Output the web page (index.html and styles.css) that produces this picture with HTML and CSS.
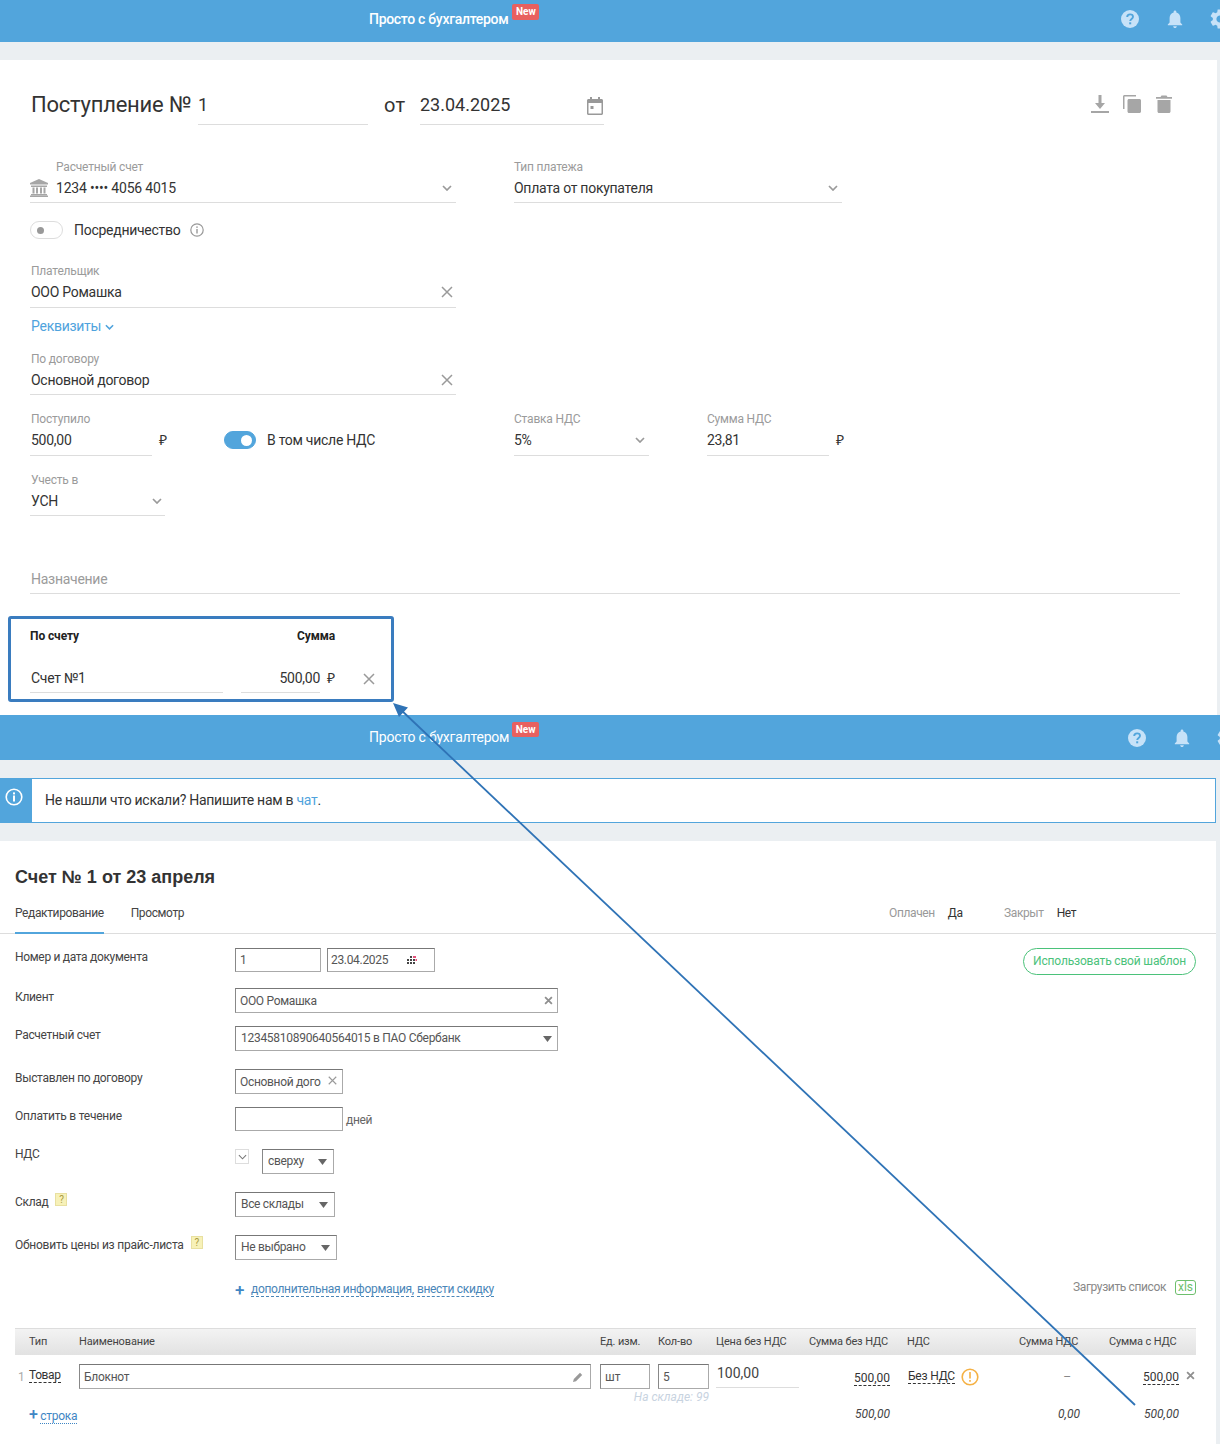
FILE: index.html
```html
<!DOCTYPE html>
<html lang="ru">
<head>
<meta charset="utf-8">
<title>Поступление и счет</title>
<link rel="stylesheet" href="styles.css">
</head>
<body>
<svg class="defs" width="0" height="0" aria-hidden="true">
  <symbol id="i-help" viewBox="0 0 18 18"><circle cx="9" cy="9" r="9" fill="#c7e2f8"/><path d="M6.2 7c0-1.600 1.200-2.600 2.900-2.600S12 5.400 12 6.800c0 2.200-2.800 2.200-2.800 4.300" fill="none" stroke="#52a5dc" stroke-width="1.900"/><rect x="8.200" y="12.300" width="2" height="2" fill="#52a5dc"/></symbol>
  <symbol id="i-bell" viewBox="2 2 20 20"><path fill="#c7e2f8" d="M12 22c1.100 0 2-.9 2-2h-4c0 1.100.9 2 2 2zm6-6v-5c0-3.070-1.630-5.640-4.500-6.320V4c0-.83-.67-1.500-1.500-1.500s-1.500.67-1.500 1.500v.68C7.640 5.360 6 7.920 6 11v5l-2 2v1h16v-1l-2-2z"/></symbol>
  <symbol id="i-gear" viewBox="2 2 20 20"><path fill="#c7e2f8" d="M19.140 12.940c.04-.3.06-.61.06-.94 0-.32-.02-.64-.07-.94l2.030-1.580c.18-.14.23-.41.12-.61l-1.920-3.320c-.12-.22-.37-.29-.59-.22l-2.390.96c-.5-.38-1.030-.7-1.620-.94l-.36-2.540c-.04-.24-.24-.41-.48-.41h-3.840c-.24 0-.43.17-.47.41l-.36 2.540c-.59.24-1.130.57-1.620.94l-2.390-.96c-.22-.08-.47 0-.59.22L2.740 8.870c-.12.21-.08.47.12.61l2.030 1.580c-.05.3-.09.63-.09.94s.02.64.07.94l-2.030 1.580c-.18.14-.23.41-.12.61l1.920 3.320c.12.22.37.29.59.22l2.390-.96c.5.38 1.030.7 1.620.94l.36 2.540c.05.24.24.41.48.41h3.840c.24 0 .44-.17.47-.41l.36-2.540c.59-.24 1.130-.56 1.620-.94l2.390.96c.22.08.47 0 .59-.22l1.920-3.320c.12-.22.07-.47-.12-.61l-2.010-1.580zM12 15.600c-1.980 0-3.600-1.620-3.600-3.600s1.620-3.600 3.600-3.600 3.600 1.620 3.600 3.600-1.620 3.600-3.600 3.600z"/></symbol>
  <symbol id="i-x" viewBox="0 0 12 12"><path d="M1 1l10 10M11 1L1 11" fill="none" stroke="#9a9a9a" stroke-width="1.500"/></symbol>
  <symbol id="i-x-bold" viewBox="0 0 12 12"><path d="M1.500 1.500l9 9M10.500 1.500l-9 9" fill="none" stroke="#8f8f8f" stroke-width="2.400"/></symbol>
  <symbol id="i-chev" viewBox="0 0 10 6"><path d="M1 1l4 4 4-4" fill="none" stroke="#9a9a9a" stroke-width="1.700"/></symbol>
  <symbol id="i-drop" viewBox="0 0 9 6"><path d="M0 0h9L4.500 6z" fill="#666"/></symbol>
</svg>

<section class="shot-a">
  <header class="topbar">
    <span class="brand brand-strong">Просто с бухгалтером</span>
    <span class="badge">New</span>
    <span class="top-icons">
      <svg class="ic-help"><use href="#i-help"/></svg>
      <svg class="ic-bell"><use href="#i-bell"/></svg>
      <svg class="ic-gear"><use href="#i-gear"/></svg>
    </span>
  </header>
  <main class="panel-a">
    <div class="doc-head">
      <h1 class="doc-title">Поступление №</h1>
      <div class="head-field head-num">1</div>
      <span class="head-from">от</span>
      <div class="head-field head-date">23.04.2025
        <svg class="ic-cal" viewBox="0 0 16 18"><path fill="#999" d="M3 0h2v2h6V0h2v2h1.500C15.300 2 16 2.700 16 3.500v13c0 .8-.7 1.500-1.500 1.500h-13C.7 18 0 17.300 0 16.500v-13C0 2.700.7 2 1.500 2H3zM1.500 6v10.500h13V6z"/><rect x="3.500" y="9" width="3" height="3" fill="#999"/></svg>
      </div>
      <div class="head-actions">
        <svg class="ic-act" viewBox="0 0 18 18"><path fill="#a6a6a6" d="M7.500 0h3v8H14l-5 6-5-6h3.500zM0 16h18v2H0z"/></svg>
        <svg class="ic-act" viewBox="0 0 18 18"><path fill="#a6a6a6" d="M6 4h10.500c.8 0 1.500.7 1.500 1.500v11c0 .8-.7 1.500-1.500 1.500H6c-.8 0-1.500-.7-1.500-1.500v-11C4.500 4.700 5.200 4 6 4zM1.500 0H13v1.500H1.500V14H0V1.500C0 .7.7 0 1.500 0z"/></svg>
        <svg class="ic-act" viewBox="0 0 18 18"><path fill="#a6a6a6" d="M2.500 5h13v11.500c0 .8-.7 1.500-1.500 1.500H4c-.8 0-1.500-.7-1.500-1.500zM1 2h4.500l1-1.500h5l1 1.500H17v1.700H1z"/></svg>
      </div>
    </div>

    <div class="row row-account">
      <div class="field w-account">
        <div class="label label-indent">Расчетный счет</div>
        <div class="value value-icon">
          <svg class="ic-bank" viewBox="0 0 18 18"><path fill="#a6a6a6" d="M9 0l9 4v1.500H0V4zM1 6.500h16V8H1zM2.500 8.500h2v6h-2zM6 8.500h2v6H6zM10 8.500h2v6h-2zM13.500 8.500h2v6h-2zM1 15h16v1.200H1zM0 16.500h18V18H0z"/></svg>
          <span class="grow">1234 •••• 4056 4015</span>
          <svg class="ic-chev"><use href="#i-chev"/></svg>
        </div>
      </div>
      <div class="field field-flush w-paytype">
        <div class="label">Тип платежа</div>
        <div class="value"><span class="grow">Оплата от покупателя</span><svg class="ic-chev"><use href="#i-chev"/></svg></div>
      </div>
    </div>

    <div class="row row-agent">
      <span class="switch"><span class="switch-dot"></span></span>
      <span class="agent-text">Посредничество</span>
      <svg class="ic-info" viewBox="0 0 14 14"><circle cx="7" cy="7" r="6.200" fill="none" stroke="#999" stroke-width="1.200"/><rect x="6.300" y="6" width="1.400" height="4.500" fill="#999"/><rect x="6.300" y="3.400" width="1.400" height="1.500" fill="#999"/></svg>
    </div>

    <div class="field w-account row-payer">
      <div class="label">Плательщик</div>
      <div class="value value-tall"><span class="grow">ООО Ромашка</span><svg class="ic-x"><use href="#i-x"/></svg></div>
    </div>
    <a class="link-req">Реквизиты <svg class="ic-chev-blue" viewBox="0 0 10 6"><path d="M1 1l4 4 4-4" fill="none" stroke="#4fa3dd" stroke-width="1.700"/></svg></a>
    <div class="field w-account row-contract">
      <div class="label">По договору</div>
      <div class="value"><span class="grow">Основной договор</span><svg class="ic-x"><use href="#i-x"/></svg></div>
    </div>

    <div class="row row-money">
      <div class="field w-money">
        <div class="label">Поступило</div>
        <div class="value value-tall">500,00</div>
      </div>
      <span class="ruble ruble-a">₽</span>
      <span class="switch switch-on"><span class="switch-dot"></span></span>
      <span class="vat-text">В том числе НДС</span>
      <div class="field field-flush w-rate">
        <div class="label">Ставка НДС</div>
        <div class="value value-tall"><span class="grow">5%</span><svg class="ic-chev"><use href="#i-chev"/></svg></div>
      </div>
      <div class="field field-flush w-money w-vatsum">
        <div class="label">Сумма НДС</div>
        <div class="value value-tall">23,81</div>
      </div>
      <span class="ruble ruble-a">₽</span>
    </div>

    <div class="field w-usn row-usn">
      <div class="label">Учесть в</div>
      <div class="value"><span class="grow">УСН</span><svg class="ic-chev"><use href="#i-chev"/></svg></div>
    </div>

    <div class="value row-purpose">Назначение</div>

    <div class="inv-head"><span class="inv-c1">По счету</span><span class="inv-c2">Сумма</span></div>
    <div class="inv-row">
      <div class="value inv-name">Счет №1</div>
      <div class="value inv-sum">500,00</div>
      <span class="ruble ruble-b">₽</span>
      <svg class="ic-x inv-x"><use href="#i-x"/></svg>
    </div>
  </main>
</section>

<section class="shot-b">
  <header class="topbar topbar-b">
    <span class="brand">Просто с бухгалтером</span>
    <span class="badge">New</span>
    <span class="top-icons top-icons-b">
      <svg class="ic-help"><use href="#i-help"/></svg>
      <svg class="ic-bell"><use href="#i-bell"/></svg>
      <svg class="ic-gear"><use href="#i-gear"/></svg>
    </span>
  </header>
  <div class="notice">
    <div class="notice-side"><svg class="ic-notice" viewBox="0 0 18 18"><circle cx="9" cy="9" r="7.800" fill="none" stroke="#fff" stroke-width="1.600"/><rect x="8" y="7.500" width="2" height="6" fill="#fff"/><rect x="8" y="4.400" width="2" height="2" fill="#fff"/></svg></div>
    <p class="notice-text">Не нашли что искали? Напишите нам в <a class="notice-link">чат</a>.</p>
  </div>
  <main class="panel-b">
    <h2 class="inv-title">Счет № 1 от 23 апреля</h2>
    <nav class="tabs">
      <span class="tab tab-active">Редактирование</span>
      <span class="tab">Просмотр</span>
      <span class="status status-first"><span class="status-key">Оплачен</span><span class="status-val">Да</span></span>
      <span class="status"><span class="status-key">Закрыт</span><span class="status-val">Нет</span></span>
    </nav>

    <div class="doc-body">
      <div class="doc-form">
        <div class="doc-row">
          <div class="doc-label">Номер и дата документа</div>
          <div class="inp w-num">1</div>
          <div class="inp w-date">23.04.2025
            <svg class="ic-grid" viewBox="0 0 10 8"><path fill="#444" d="M3 0h2v2H3zM0 3h2v2H0zM3 3h2v2H3zM6 3h2v2H6zM0 6h2v2H0zM3 6h2v2H3zM6 6h2v2H6z"/><path fill="#e2517a" d="M6 0h3v2H6zM8.500 3H10v2H8.500z"/></svg>
          </div>
        </div>
        <div class="doc-row mt16 h25">
          <div class="doc-label">Клиент</div>
          <div class="inp w-wide"><span class="grow">ООО Ромашка</span><svg class="ic-x-small"><use href="#i-x-bold"/></svg></div>
        </div>
        <div class="doc-row mt13 h25">
          <div class="doc-label">Расчетный счет</div>
          <div class="inp w-wide inp-select"><span class="grow">12345810890640564015 в ПАО Сбербанк</span><svg class="ic-drop"><use href="#i-drop"/></svg></div>
        </div>
        <div class="doc-row mt18 h25">
          <div class="doc-label">Выставлен по договору</div>
          <div class="inp w-contract"><span class="grow">Основной дого</span><svg class="ic-x-contract"><use href="#i-x"/></svg></div>
        </div>
        <div class="doc-row mt13">
          <div class="doc-label doc-label-loose">Оплатить в течение</div>
          <div class="inp w-contract"></div>
          <span class="days">дней</span>
        </div>
        <div class="doc-row mt18 h25">
          <div class="doc-label doc-label-high">НДС</div>
          <span class="check"><svg class="ic-check" viewBox="0 0 10 6"><path d="M1 1l4 4 4-4" fill="none" stroke="#777" stroke-width="1.200"/></svg></span>
          <div class="inp inp-select w-top"><span class="grow">сверху</span><svg class="ic-drop"><use href="#i-drop"/></svg></div>
        </div>
        <div class="doc-row mt18 h25">
          <div class="doc-label doc-label-low">Склад<span class="hint">?</span></div>
          <div class="inp inp-select w-store"><span class="grow">Все склады</span><svg class="ic-drop"><use href="#i-drop"/></svg></div>
        </div>
        <div class="doc-row mt18 h25">
          <div class="doc-label doc-label-low doc-label-loose">Обновить цены из прайс-листа<span class="hint">?</span></div>
          <div class="inp inp-select w-price"><span class="grow">Не выбрано</span><svg class="ic-drop"><use href="#i-drop"/></svg></div>
        </div>
      </div>
      <a class="template-btn">Использовать свой шаблон</a>
    </div>

    <div class="extra-row">
      <span class="extra-plus">+</span>
      <a class="dash-link">дополнительная информация,</a>
      <a class="dash-link">внести скидку</a>
      <span class="upload">Загрузить список</span>
      <span class="xls">xls</span>
    </div>

    <div class="tbl tbl-head">
      <span></span><span>Тип</span><span>Наименование</span><span>Ед. изм.</span><span>Кол-во</span><span>Цена без НДС</span><span>Сумма без НДС</span><span>НДС</span><span>Сумма НДС</span><span>Сумма с НДС</span>
    </div>
    <div class="tbl tbl-body">
      <span class="cell-no">1</span>
      <span class="cell-type"><a class="dash-dark">Товар</a></span>
      <div class="inp w-name"><span class="grow">Блокнот</span><svg class="ic-pencil" viewBox="0 0 10 10"><path fill="#999" d="M0 10l.8-3L7 .8 9.200 3 3 9.200z"/></svg></div>
      <div class="inp w-unit">шт</div>
      <div class="inp w-qty">5</div>
      <div class="cell-price">100,00</div>
      <div class="cell-sum"><a class="dash-dark">500,00</a></div>
      <div class="cell-vat"><a class="dash-dark">Без НДС</a><svg class="ic-warn" viewBox="0 0 18 18"><circle cx="9" cy="9" r="7.800" fill="none" stroke="#f5b144" stroke-width="1.600"/><rect x="8.200" y="4" width="1.600" height="6.500" fill="#f5b144"/><rect x="8.200" y="12" width="1.600" height="1.800" fill="#f5b144"/></svg></div>
      <div class="cell-vatsum">–</div>
      <div class="cell-total"><a class="dash-dark">500,00</a><svg class="ic-x-row"><use href="#i-x-bold"/></svg></div>

      <div class="stock">На складе: 99</div>

      <div class="add-row"><span class="add-plus">+</span> <a class="dot-link">строка</a></div>
      <div class="tot tot-sum">500,00</div>
      <div class="tot tot-vat">0,00</div>
      <div class="tot tot-total">500,00</div>
    </div>
  </main>
</section>

<div class="callout"></div>
<svg class="arrow" viewBox="0 0 1220 1444">
  <line x1="1135" y1="1405" x2="400" y2="709" stroke="#2f73b6" stroke-width="1.800"/>
  <path d="M393 703l15 4.500-9 9.500z" fill="#2f73b6"/>
</svg>
</body>
</html>
```

FILE: styles.css
```css
* { box-sizing: border-box; }
html, body { margin: 0; padding: 0; }
body {
  width: 1220px;
  height: 1444px;
  overflow: hidden;
  position: relative;
  background: #ebeff2;
  font-family: Roboto, "Liberation Sans", sans-serif;
  font-size: 14px;
  letter-spacing: -.27px;
  color: #333;
}
.defs { position: absolute; }
p, h1, h2 { margin: 0; }
.grow { flex: 1; min-width: 0; white-space: nowrap; overflow: hidden; }

/* Top bar */
.topbar {
  height: 42px;
  background: #52a5dc;
  display: flex;
  padding-left: 369px;
  overflow: hidden;
  position: relative;
}
.topbar-b { height: 45px; }
.brand { color: #fff; font-size: 14px; line-height: 20px; margin-top: 9px; letter-spacing: -.22px; white-space: nowrap; }
.brand-strong { font-weight: 500; letter-spacing: -.3px; }
.topbar-b .brand { margin-top: 12px; }
.badge {
  background: #e8605f;
  color: #fff;
  font-size: 10px;
  font-weight: 700;
  letter-spacing: 0;
  line-height: 15px;
  height: 16px;
  width: 27px;
  text-align: center;
  border-radius: 2px;
  margin: 4px 0 0 4px;
}
.topbar-b .badge { margin: 7px 0 0 3px; height: 15px; }
.top-icons { margin-left: auto; display: flex; align-items: center; gap: 26px; margin-right: -10px; height: 38px; }
.top-icons-b { margin-right: -17px; height: 45px; }
.ic-help { width: 18px; height: 18px; margin-right: 1px; }
.ic-bell { width: 18px; height: 18px; }
.ic-gear { width: 20px; height: 20px; }

/* First panel */
.shot-a { height: 715px; }
.panel-a {
  margin-top: 18px;
  width: 1217px;
  height: 655px;
  background: #fff;
  padding: 27px 0 0 30px;
}
.doc-head { display: flex; height: 38px; }
.doc-title { font-size: 22px; font-weight: 400; letter-spacing: -.23px; line-height: 36px; margin-left: 1px; width: 167px; white-space: nowrap; color: #333; }
.head-field { font-size: 18px; letter-spacing: 0; line-height: 36px; border-bottom: 1px solid #ddd; height: 38px; display: flex; align-items: flex-start; }
.head-num { width: 170px; }
.head-from { font-size: 20px; letter-spacing: .3px; line-height: 36px; margin: 0 14px 0 16px; width: 22px; }
.head-date { width: 184px; justify-content: space-between; }
.ic-cal { width: 16px; height: 18px; margin: 10px 1px 0 0; }
.head-actions { display: flex; gap: 14px; margin-left: auto; margin-right: 44px; padding-top: 8px; }
.ic-act { width: 18px; height: 18px; }

.row { display: flex; }
.field { flex: none; }
.label { font-size: 12px; letter-spacing: -.2px; line-height: 14px; color: #9b9b9b; white-space: nowrap; padding-left: 1px; }
.label-indent { padding-left: 26px; }
.value {
  display: flex;
  align-items: center;
  font-size: 14px;
  line-height: 20px;
  padding: 4px 0 4px 1px;
  border-bottom: 1px solid #ddd;
  color: #333;
  white-space: nowrap;
}
.value-icon { padding-left: 0; letter-spacing: -.2px; }
.value-tall { padding-bottom: 5px; }
.field-flush .label, .field-flush .value { padding-left: 0; }
.row-account { margin-top: 35px; }
.w-account { width: 426px; }
.w-paytype { width: 328px; margin-left: 58px; }
.ic-bank { width: 18px; height: 18px; margin-right: 8px; }
.ic-chev { width: 10px; height: 6px; margin-right: 4px; flex: none; }
.ic-x { width: 12px; height: 12px; margin-right: 3px; flex: none; }

.row-agent { margin-top: 18px; height: 18px; align-items: center; }
.switch { width: 33px; height: 18px; border: 1px solid #ddd; border-radius: 9px; display: flex; align-items: center; padding-left: 6px; flex: none; }
.switch-dot { width: 7px; height: 7px; border-radius: 50%; background: #999; }
.agent-text { margin-left: 11px; width: 116px; white-space: nowrap; }
.ic-info { width: 14px; height: 14px; }

.row-payer { margin-top: 25px; }
.link-req { display: flex; align-items: center; gap: 4px; color: #4fa3dd; line-height: 20px; margin-top: 8px; padding-left: 1px; }
.ic-chev-blue { width: 9px; height: 6px; margin-top: 1px; }
.row-contract { margin-top: 16px; }

.row-money { margin-top: 17px; }
.w-money { width: 122px; }
.ruble { font-family: "Liberation Sans", sans-serif; font-size: 14px; letter-spacing: 0; line-height: 20px; }
.ruble-a { margin: 18px 0 0 7px; width: 8px; }
.switch-on { background: #52a5dc; border-color: #52a5dc; width: 32px; margin: 19px 0 0 57px; justify-content: flex-end; padding: 0 3px 0 0; }
.switch-on .switch-dot { width: 11px; height: 11px; background: #fff; }
.vat-text { margin: 18px 0 0 11px; line-height: 20px; width: 247px; white-space: nowrap; }
.w-rate { width: 135px; }
.w-vatsum { margin-left: 58px; }

.row-usn { margin-top: 17px; }
.w-usn { width: 135px; }
.w-usn .ic-chev { margin-right: 3px; }
.row-purpose { margin-top: 49px; width: 1150px; color: #9b9b9b; }

.inv-head { display: flex; margin-top: 35px; font-size: 12px; font-weight: 700; letter-spacing: -.1px; line-height: 14px; color: #222; width: 305px; justify-content: space-between; }
.inv-row { display: flex; margin-top: 21px; }
.inv-name { width: 193px; }
.inv-sum { width: 79px; margin-left: 18px; justify-content: flex-end; }
.ruble-b { margin: 4px 0 0 7px; width: 8px; }
.inv-x { margin: 9px 0 0 28px; }

/* Second panel */
.shot-b { height: 729px; }
.notice {
  margin-top: 18px;
  width: 1216px;
  height: 45px;
  display: flex;
  background: #fff;
  border: 1px solid #52a5dc;
  border-left: 0;
}
.notice-side { width: 32px; background: #52a5dc; padding: 9px 0 0 5px; }
.ic-notice { width: 18px; height: 18px; display: block; }
.notice-text { margin-left: 13px; line-height: 42px; color: #333; }
.notice-link { color: #4fa3dd; }

.panel-b {
  margin-top: 18px;
  width: 1216px;
  height: 603px;
  background: #fff;
  padding-top: 26px;
  letter-spacing: -.32px;
}
.inv-title { font-family: "Liberation Sans", sans-serif; font-size: 18px; font-weight: 700; letter-spacing: 0; line-height: 20px; margin-left: 15px; color: #333; }
.tabs { display: flex; height: 36px; margin-top: 11px; border-bottom: 1px solid #ddd; padding-left: 15px; font-size: 12px; letter-spacing: -.38px; line-height: 16px; }
.tab { padding-top: 7px; margin-right: 27px; height: 36px; color: #444; }
.tab-active { border-bottom: 2px solid #52a5dc; }
.status { padding-top: 7px; display: flex; gap: 13px; white-space: nowrap; }
.status-first { margin-left: auto; width: 47px; }
.status-first + .status { margin-right: 140px; margin-left: 68px; width: 72px; }
.status-key { color: #999; }
.status-val { color: #333; }

.doc-body { display: flex; justify-content: space-between; padding: 14px 20px 0 15px; }
.doc-form { width: 600px; }
.doc-row { display: flex; align-items: flex-start; height: 24px; font-size: 12px; }
.h25 { height: 25px; }
.mt13 { margin-top: 13px; }
.mt16 { margin-top: 16px; }
.mt18 { margin-top: 18px; }
.doc-label { width: 220px; flex: none; line-height: 16px; padding-top: 1px; color: #444; white-space: nowrap; display: flex; }
.doc-label-high { padding-top: 0; margin-top: -3px; }
.doc-label-low { padding-top: 2px; }
.doc-label-loose { letter-spacing: -.24px; }
.hint { width: 12px; height: 13px; margin: -1px 0 0 7px; background: #f7f1b8; border: 1px solid #e8e0a0; color: #a89a40; font-size: 10px; line-height: 11px; text-align: center; }
.inp {
  display: flex;
  align-items: center;
  height: 100%;
  padding: 0 4px;
  font-size: 12px;
  color: #555;
  background: #fff;
  border: 1px solid #aaa;
  border-top-color: #777;
  border-left-color: #888;
  white-space: nowrap;
  flex: none;
}
.inp-select { padding-bottom: 2px; padding-right: 5px; }
.inp-select .ic-drop { margin-top: 2px; }
.w-num { width: 86px; }
.w-date { width: 108px; margin-left: 6px; padding-left: 3px; }
.ic-grid { width: 10px; height: 8px; margin-left: 19px; }
.w-wide { width: 323px; }
.w-wide.inp-select { padding-left: 5px; padding-right: 4px; letter-spacing: -.28px; }
.ic-x-small { width: 9px; height: 9px; }
.ic-drop { width: 9px; height: 6px; margin-right: 1px; flex: none; }
.w-contract { width: 108px; }
.ic-x-contract { width: 9px; height: 9px; margin: -3px 1px 0 0; }
.days { margin: 5px 0 0 3px; line-height: 16px; color: #666; }
.check { width: 14px; height: 15px; border: 1px solid #ddd; display: flex; align-items: center; justify-content: center; flex: none; }
.ic-check { width: 9px; height: 6px; }
.w-top { width: 72px; margin-left: 13px; padding-left: 5px; }
.w-store { width: 100px; padding-left: 5px; }
.w-price { width: 102px; padding-left: 5px; }

.template-btn { width: 173px; height: 27px; border: 1px solid #4bc27a; border-radius: 14px; color: #4bc27a; font-size: 12px; letter-spacing: -.17px; line-height: 25px; text-align: center; white-space: nowrap; }

.extra-row { display: flex; align-items: center; height: 16px; margin: 22px 20px 0 235px; font-size: 12px; color: #4a86b8; }
.extra-plus { font-size: 17px; font-weight: 500; width: 16px; color: #3f86c4; }
.dash-link { border-bottom: 1px dashed #4a86b8; line-height: 13px; margin-right: 3px; white-space: nowrap; }
.upload { margin-left: auto; color: #888; letter-spacing: -.38px; margin-right: 9px; margin-top: -6px; }
.xls { width: 21px; height: 15px; border: 1px solid #6dbf6d; border-radius: 3px; color: #6dbf6d; letter-spacing: 0; line-height: 13px; text-align: center; margin-top: -6px; }

.tbl {
  display: grid;
  grid-template-columns: 14px 50px 521px 58px 58px 93px 98px 112px 90px 87px;
  width: 1181px;
  margin-left: 15px;
  font-size: 11px;
}
.tbl-head { margin-top: 30px; height: 27px; background: linear-gradient(#f3f3f3, #e2e2e2); border-top: 1px solid #ddd; letter-spacing: -.15px; line-height: 26px; color: #444; white-space: nowrap; }
.tbl-body { padding-top: 9px; font-size: 12px; letter-spacing: 0; }
.tbl-body .inp { height: 25px; }
.cell-no { padding: 5px 0 0 3px; line-height: 16px; color: #aaa; }
.cell-type { padding-top: 3px; line-height: 16px; letter-spacing: -.4px; }
.dash-dark { color: #333; border-bottom: 1px dashed #333; line-height: 14px; display: inline-block; }
.w-name { width: 512px; letter-spacing: -.3px; }
.ic-pencil { width: 10px; height: 10px; margin-right: 3px; }
.w-unit { width: 50px; }
.w-qty { width: 51px; }
.cell-price { font-size: 14px; width: 83px; height: 24px; line-height: 18px; border-bottom: 1px solid #ddd; padding-left: 1px; color: #444; }
.cell-sum { padding: 6px 17px 0 0; text-align: right; line-height: 16px; }
.cell-vat { display: flex; gap: 6px; padding: 5px 0 0 1px; line-height: 16px; align-items: flex-start; letter-spacing: -.2px; }
.ic-warn { width: 18px; height: 18px; margin-top: -1px; }
.cell-vatsum { padding: 5px 38px 0 0; text-align: right; line-height: 16px; color: #888; }
.cell-total { display: flex; justify-content: flex-end; align-items: flex-start; padding-top: 6px; line-height: 16px; }
.ic-x-row { width: 9px; height: 9px; margin: 1px 1px 0 7px; }
.stock { grid-column: 3 / 6; grid-row: 2; font-style: italic; font-size: 12px; line-height: 12px; padding: 2px 7px 0 0; text-align: right; color: #c8d3df; }
.add-row { grid-column: 1 / 4; grid-row: 3; padding: 4px 0 0 14px; color: #3f86c4; font-size: 12px; letter-spacing: -.3px; line-height: 16px; }
.add-plus { font-size: 16px; font-weight: 500; }
.dot-link { border-bottom: 1px dotted #3f86c4; display: inline-block; line-height: 13px; }
.tot { grid-row: 3; font-style: italic; line-height: 16px; padding-top: 3px; text-align: right; color: #444; }
.tot-sum { grid-column: 7; padding-right: 17px; }
.tot-vat { grid-column: 9; padding-right: 29px; }
.tot-total { grid-column: 10; padding-right: 17px; }

/* Annotation laid over the screenshots */
.callout { position: absolute; left: 8px; top: 616px; width: 386px; height: 86px; border: 3px solid #3a7cbf; border-radius: 3px; pointer-events: none; }
.arrow { position: absolute; left: 0; top: 0; width: 1220px; height: 1444px; pointer-events: none; }
```
